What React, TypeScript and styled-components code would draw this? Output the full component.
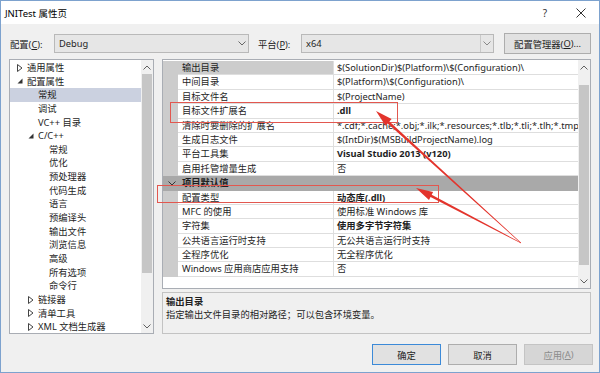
import React from 'react';
import styled, { createGlobalStyle } from 'styled-components';

const GlobalStyle = createGlobalStyle`
  html, body {
    margin: 0;
    padding: 0;
    background: #ffffff;
  }
  body {
    font-family: "Segoe UI", "Noto Sans", "Noto Sans CJK SC", sans-serif;
    font-size: 9.3px;
    color: #1e1e1e;
  }
`;

const Window = styled.div`
  position: relative;
  width: 600px;
  height: 373px;
  box-sizing: border-box;
  border: 1px solid #7da2ce;
  background: #f0f0f0;
  display: flex;
  flex-direction: column;
  overflow: hidden;
`;

const TitleBar = styled.div`
  height: 23px;
  flex: none;
  background: #ffffff;
  display: flex;
  align-items: center;
  padding-left: 4px;
`;

const Title = styled.div`
  flex: 1;
  font-size: 9.5px;
  color: #000;
`;

const TitleButton = styled.div`
  width: 36px;
  height: 23px;
  display: flex;
  align-items: center;
  justify-content: center;
  color: #333;
  font-size: 10px;
`;

const Body = styled.div`
  flex: 1;
  display: flex;
  flex-direction: column;
  padding: 0 8px;
`;

const ConfigRow = styled.div`
  margin-top: 10px;
  height: 19px;
  display: flex;
  align-items: center;
`;

const ConfigLabel = styled.div<{ $width: number; $ml?: number }>`
  width: ${(p) => p.$width}px;
  margin-left: ${(p) => p.$ml ?? 0}px;
  padding-left: 1px;
  box-sizing: border-box;
  color: #1e1e1e;
`;

const Combo = styled.div<{ $width: number }>`
  width: ${(p) => p.$width}px;
  height: 19px;
  box-sizing: border-box;
  border: 1px solid #b9b9b9;
  background: #e6e6e6;
  display: flex;
  align-items: center;
  padding-left: 4px;
  color: #1e1e1e;
`;

const ComboText = styled.div`
  flex: 1;
`;

const ComboButton = styled.div<{ $split?: boolean }>`
  width: 11px;
  height: 17px;
  display: flex;
  align-items: center;
  justify-content: center;
  border-left: ${(p) => (p.$split ? '1px solid #c9c9c9' : 'none')};
  margin-right: 1px;
`;

const PushButton = styled.div<{ $width: number; $ml?: number; $default?: boolean; $disabled?: boolean }>`
  width: ${(p) => p.$width}px;
  margin-left: ${(p) => p.$ml ?? 0}px;
  height: 21px;
  box-sizing: border-box;
  border: 1px solid ${(p) => (p.$default ? '#3c8ad8' : p.$disabled ? '#c4c4c4' : '#adadad')};
  background: ${(p) => (p.$disabled ? '#d6d6d6' : '#e1e1e1')};
  color: ${(p) => (p.$disabled ? '#8c8c8c' : '#1e1e1e')};
  display: flex;
  align-items: center;
  justify-content: center;
`;

const Main = styled.div`
  margin-top: 6px;
  height: 275px;
  display: flex;
  gap: 8px;
`;

const Tree = styled.div`
  width: 145px;
  box-sizing: border-box;
  border: 1px solid #a9adb4;
  background: #ffffff;
  display: flex;
`;

const TreeList = styled.div`
  flex: 1;
  padding-top: 1px;
  overflow: hidden;
`;

const TreeRow = styled.div<{ $level: number; $selected?: boolean }>`
  height: 13.65px;
  line-height: 13.65px;
  display: flex;
  align-items: center;
  padding-left: ${(p) => 7 + p.$level * 11}px;
  background: ${(p) => (p.$selected ? '#cbd1e0' : 'transparent')};
  white-space: nowrap;
  color: #1e1e1e;
`;

const Expander = styled.div`
  width: 10px;
  height: 13px;
  flex: none;
  display: flex;
  align-items: center;
  justify-content: flex-start;
`;

const ScrollBar = styled.div`
  width: 12px;
  flex: none;
  background: #f0f0f0;
  display: flex;
  flex-direction: column;
`;

const ScrollArrow = styled.div`
  height: 14px;
  flex: none;
  display: flex;
  align-items: center;
  justify-content: center;
`;

const ScrollTrack = styled.div<{ $before: number; $thumb: number }>`
  flex: 1;
  display: flex;
  flex-direction: column;
  padding-top: ${(p) => p.$before}px;
  &::after {
    content: '';
    display: block;
    margin: 0 1px;
    height: ${(p) => p.$thumb}px;
    background: #c6c6c6;
  }
`;

const RightPanel = styled.div`
  flex: 1;
  display: flex;
  flex-direction: column;
  gap: 3px;
`;

const Grid = styled.div`
  height: 230px;
  box-sizing: border-box;
  border: 1px solid #a9adb4;
  background: #ffffff;
  display: flex;
`;

const GridRows = styled.div`
  flex: 1;
  padding-top: 1px;
  display: flex;
  flex-direction: column;
  overflow: hidden;
`;

const PropRow = styled.div<{ $header?: boolean }>`
  height: 14.4px;
  flex: none;
  display: grid;
  grid-template-columns: 15px 156px 1fr;
  line-height: 13.4px;
  background: ${(p) => (p.$header ? '#a9a9a9' : 'transparent')};
`;

const Gutter = styled.div`
  background: #cccccc;
`;

const HeaderGutter = styled.div`
  display: flex;
  align-items: center;
  justify-content: center;
  padding-left: 3px;
`;

const NameCell = styled.div<{ $selected?: boolean }>`
  padding-left: 4px;
  border-bottom: 1px solid #dedede;
  border-right: 1px solid #dedede;
  background: ${(p) => (p.$selected ? '#cccccc' : '#ffffff')};
  white-space: nowrap;
  overflow: hidden;
`;

const HeaderName = styled.div`
  grid-column: 2 / 4;
  padding-left: 4px;
  font-weight: 700;
  color: #1e1e1e;
`;

const ValueCell = styled.div<{ $bold?: boolean }>`
  padding-left: 3px;
  border-bottom: 1px solid #dedede;
  font-weight: ${(p) => (p.$bold ? 700 : 400)};
  white-space: nowrap;
  overflow: hidden;
`;

const GridFiller = styled.div`
  flex: 1;
  background: #ffffff;
`;

const Description = styled.div`
  height: 42px;
  box-sizing: border-box;
  border: 1px solid #c3c3c3;
  padding: 2px 0 0 3px;
  line-height: 13px;
`;

const DescTitle = styled.div`
  font-weight: 700;
`;

const ButtonRow = styled.div`
  margin-top: 10px;
  margin-right: -2px;
  display: flex;
  justify-content: flex-end;
  gap: 7px;
`;

const Overlay = styled.svg`
  position: absolute;
  left: -1px;
  top: -1px;
  width: 600px;
  height: 373px;
  pointer-events: none;
`;

const Chevron = ({ up = false, color = '#555' }: { up?: boolean; color?: string }) => (
  <svg width="8" height="5" viewBox="0 0 8 5">
    <polyline
      points={up ? '0.5,4.5 4,1 7.5,4.5' : '0.5,0.5 4,4 7.5,0.5'}
      fill="none"
      stroke={color}
      strokeWidth="1"
    />
  </svg>
);

const ClosedTriangle = () => (
  <svg width="6" height="8" viewBox="0 0 6 8">
    <polygon points="0.5,0.5 5,4 0.5,7.5" fill="none" stroke="#444" strokeWidth="1" />
  </svg>
);

const OpenTriangle = () => (
  <svg width="6" height="6" viewBox="0 0 6 6">
    <polygon points="5.5,0.5 5.5,5.5 0.5,5.5" fill="#333" />
  </svg>
);

type TreeItem = { label: string; level: number; expander?: 'open' | 'closed'; selected?: boolean };

const treeItems: TreeItem[] = [
  { label: '通用属性', level: 0, expander: 'closed' },
  { label: '配置属性', level: 0, expander: 'open' },
  { label: '常规', level: 1, selected: true },
  { label: '调试', level: 1 },
  { label: 'VC++ 目录', level: 1 },
  { label: 'C/C++', level: 1, expander: 'open' },
  { label: '常规', level: 2 },
  { label: '优化', level: 2 },
  { label: '预处理器', level: 2 },
  { label: '代码生成', level: 2 },
  { label: '语言', level: 2 },
  { label: '预编译头', level: 2 },
  { label: '输出文件', level: 2 },
  { label: '浏览信息', level: 2 },
  { label: '高级', level: 2 },
  { label: '所有选项', level: 2 },
  { label: '命令行', level: 2 },
  { label: '链接器', level: 1, expander: 'closed' },
  { label: '清单工具', level: 1, expander: 'closed' },
  { label: 'XML 文档生成器', level: 1, expander: 'closed' },
];

type Prop = { name: string; value?: string; bold?: boolean; header?: boolean; selected?: boolean };

const props: Prop[] = [
  { name: '输出目录', value: '$(SolutionDir)$(Platform)\\$(Configuration)\\', selected: true },
  { name: '中间目录', value: '$(Platform)\\$(Configuration)\\' },
  { name: '目标文件名', value: '$(ProjectName)' },
  { name: '目标文件扩展名', value: '.dll', bold: true },
  { name: '清除时要删除的扩展名', value: '*.cdf;*.cache;*.obj;*.ilk;*.resources;*.tlb;*.tli;*.tlh;*.tmp;*.rsp' },
  { name: '生成日志文件', value: '$(IntDir)$(MSBuildProjectName).log' },
  { name: '平台工具集', value: 'Visual Studio 2013 (v120)', bold: true },
  { name: '启用托管增量生成', value: '否' },
  { name: '项目默认值', header: true },
  { name: '配置类型', value: '动态库(.dll)', bold: true },
  { name: 'MFC 的使用', value: '使用标准 Windows 库' },
  { name: '字符集', value: '使用多字节字符集', bold: true },
  { name: '公共语言运行时支持', value: '无公共语言运行时支持' },
  { name: '全程序优化', value: '无全程序优化' },
  { name: 'Windows 应用商店应用支持', value: '否' },
];

type Pt = [number, number];

// tapered annotation arrow, thin at the tail and a solid head at the tip
const arrowPoints = (tail: Pt, tip: Pt, headLen = 17, headW = 9, shaftW = 2.6) => {
  const dx = tip[0] - tail[0];
  const dy = tip[1] - tail[1];
  const len = Math.hypot(dx, dy);
  const ux = dx / len;
  const uy = dy / len;
  const nx = -uy;
  const ny = ux;
  const bx = tip[0] - ux * headLen;
  const by = tip[1] - uy * headLen;
  const p = (x: number, y: number) => `${x.toFixed(1)},${y.toFixed(1)}`;
  return [
    p(tail[0] + nx * 0.3, tail[1] + ny * 0.3),
    p(bx + (nx * shaftW) / 2, by + (ny * shaftW) / 2),
    p(bx + (nx * headW) / 2, by + (ny * headW) / 2),
    p(tip[0], tip[1]),
    p(bx - (nx * headW) / 2, by - (ny * headW) / 2),
    p(bx - (nx * shaftW) / 2, by - (ny * shaftW) / 2),
    p(tail[0] - nx * 0.3, tail[1] - ny * 0.3),
  ].join(' ');
};

const Annotations = () => (
  <Overlay viewBox="0 0 600 373">
    <rect x="170.5" y="102.5" width="227" height="20" fill="none" stroke="#e2574f" strokeWidth="1" />
    <rect x="157.5" y="185.5" width="281" height="17" fill="none" stroke="#e2574f" strokeWidth="1" />
    <polygon points={arrowPoints([521, 243], [376, 111])} fill="#e3342c" />
    <polygon points={arrowPoints([521, 243], [416, 188])} fill="#e3342c" />
  </Overlay>
);

export default function App() {
  return (
    <>
      <GlobalStyle />
      <Window>
        <TitleBar>
          <Title>JNITest 属性页</Title>
          <TitleButton>?</TitleButton>
          <TitleButton>
            <svg width="10" height="10" viewBox="0 0 10 10">
              <path d="M0.5 0.5 L9.5 9.5 M9.5 0.5 L0.5 9.5" stroke="#333" strokeWidth="1" />
            </svg>
          </TitleButton>
        </TitleBar>
        <Body>
          <ConfigRow>
            <ConfigLabel $width={45}>
              配置(<u>C</u>):
            </ConfigLabel>
            <Combo $width={195}>
              <ComboText>Debug</ComboText>
              <ComboButton>
                <Chevron color="#666" />
              </ComboButton>
            </Combo>
            <ConfigLabel $width={44} $ml={8}>
              平台(<u>P</u>):
            </ConfigLabel>
            <Combo $width={193}>
              <ComboText>x64</ComboText>
              <ComboButton $split>
                <Chevron color="#888" />
              </ComboButton>
            </Combo>
            <PushButton $width={87} $ml={10}>
              配置管理器(<u>O</u>)...
            </PushButton>
          </ConfigRow>
          <Main>
            <Tree>
              <TreeList>
                {treeItems.map((item, i) => (
                  <TreeRow key={i} $level={item.level} $selected={item.selected}>
                    <Expander>
                      {item.expander === 'closed' && <ClosedTriangle />}
                      {item.expander === 'open' && <OpenTriangle />}
                    </Expander>
                    {item.label}
                  </TreeRow>
                ))}
              </TreeList>
              <ScrollBar>
                <ScrollArrow>
                  <Chevron up color="#606060" />
                </ScrollArrow>
                <ScrollTrack $before={0} $thumb={199} />
                <ScrollArrow>
                  <Chevron color="#606060" />
                </ScrollArrow>
              </ScrollBar>
            </Tree>
            <RightPanel>
              <Grid>
                <GridRows>
                  {props.map((prop, i) =>
                    prop.header ? (
                      <PropRow key={i} $header>
                        <HeaderGutter>
                          <Chevron color="#333" />
                        </HeaderGutter>
                        <HeaderName>{prop.name}</HeaderName>
                      </PropRow>
                    ) : (
                      <PropRow key={i}>
                        <Gutter />
                        <NameCell $selected={prop.selected}>{prop.name}</NameCell>
                        <ValueCell $bold={prop.bold}>{prop.value}</ValueCell>
                      </PropRow>
                    )
                  )}
                  <GridFiller />
                </GridRows>
                <ScrollBar>
                  <ScrollArrow>
                    <Chevron up color="#606060" />
                  </ScrollArrow>
                  <ScrollTrack $before={11} $thumb={180} />
                  <ScrollArrow>
                    <Chevron color="#606060" />
                  </ScrollArrow>
                </ScrollBar>
              </Grid>
              <Description>
                <DescTitle>输出目录</DescTitle>
                <div>指定输出文件目录的相对路径；可以包含环境变量。</div>
              </Description>
            </RightPanel>
          </Main>
          <ButtonRow>
            <PushButton $width={69} $default>
              确定
            </PushButton>
            <PushButton $width={69}>取消</PushButton>
            <PushButton $width={69} $disabled>
              应用(<u>A</u>)
            </PushButton>
          </ButtonRow>
        </Body>
        <Annotations />
      </Window>
    </>
  );
}
